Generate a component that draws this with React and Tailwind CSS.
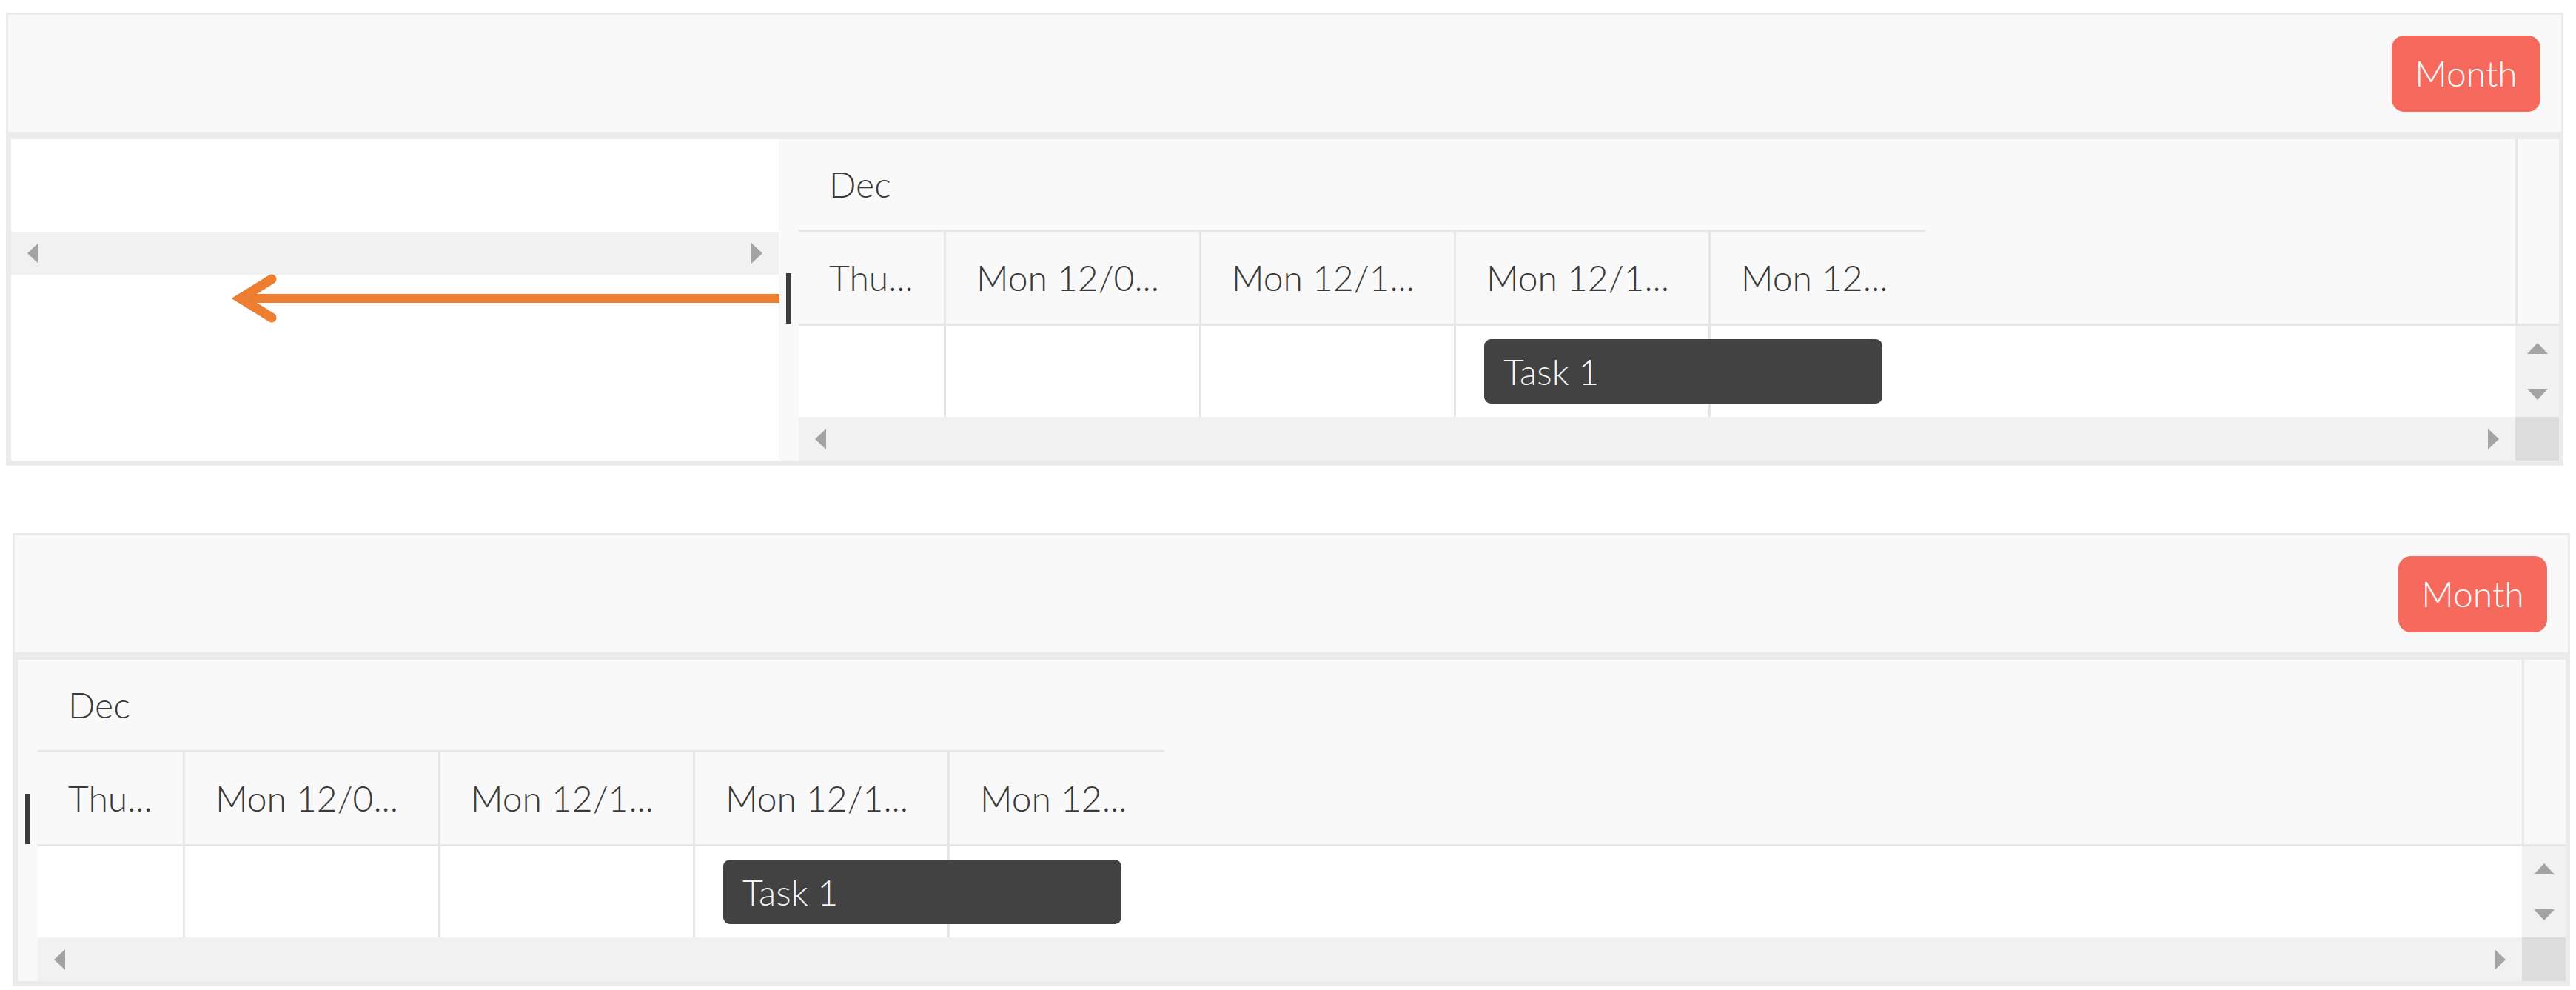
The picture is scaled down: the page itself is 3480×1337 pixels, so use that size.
const DAYS = [
  { label: "Thu...", width: "w-[199px]", line: true },
  { label: "Mon 12/0...", width: "w-[345px]", line: true },
  { label: "Mon 12/1...", width: "w-[344px]", line: true },
  { label: "Mon 12/1...", width: "w-[344px]", line: true },
  { label: "Mon 12...", width: "w-[290px]", line: false }
]

const Tri = ({ dir }) => {
  if (dir === "left")
    return (
      <svg width="15" height="28" viewBox="0 0 15 28">
        <polygon points="15,0 0,14 15,28" fill="#a3a3a3" />
      </svg>
    )
  if (dir === "right")
    return (
      <svg width="15" height="28" viewBox="0 0 15 28">
        <polygon points="0,0 15,14 0,28" fill="#a3a3a3" />
      </svg>
    )
  if (dir === "up")
    return (
      <svg width="28" height="15" viewBox="0 0 28 15">
        <polygon points="0,15 14,0 28,15" fill="#a3a3a3" />
      </svg>
    )
  return (
    <svg width="28" height="15" viewBox="0 0 28 15">
      <polygon points="0,0 28,0 14,15" fill="#a3a3a3" />
    </svg>
  )
}

const HScroll = ({ className = "" }) => (
  <div className={"h-[59px] bg-[#f1f1f1] flex items-center justify-between px-[22px] shrink-0 " + className}>
    <Tri dir="left" />
    <Tri dir="right" />
  </div>
)

const Timeline = () => (
  <div className="flex-1 flex min-w-0">
    <div className="flex-1 flex flex-col min-w-0">
      {/* header */}
      <div className="h-[252px] bg-[#f9f9f9] border-b-[3px] border-[#e6e6e6] shrink-0">
        <div className="w-[1522px] h-[125px] border-b-[3px] border-[#e6e6e6] flex items-center pl-[41px]">
          Dec
        </div>
        <div className="flex h-[124px]">
          {DAYS.map((d, i) => (
            <div
              key={i}
              className={
                d.width +
                " h-full flex items-center pl-[41px] whitespace-nowrap " +
                (d.line ? "border-r-[3px] border-[#e6e6e6]" : "")
              }
            >
              {d.label}
            </div>
          ))}
        </div>
      </div>
      {/* task row */}
      <div className="relative h-[123px] bg-white flex shrink-0">
        {DAYS.map((d, i) => (
          <div
            key={i}
            className={d.width + " h-full " + (d.line ? "border-r-[3px] border-[#e6e6e6]" : "")}
          />
        ))}
        <div className="absolute left-[926px] top-[18px] w-[538px] h-[87px] rounded-[9px] bg-[#424242] text-[#f4f4f4] flex items-center pl-[26px]">
          Task 1
        </div>
      </div>
      <HScroll />
    </div>
    {/* vertical scrollbar column */}
    <div className="w-[59px] flex flex-col shrink-0">
      <div className="h-[252px] bg-[#f9f9f9] border-l-[3px] border-b-[3px] border-[#e6e6e6]" />
      <div className="h-[123px] bg-[#f1f1f1] flex flex-col items-center justify-between py-[23px]">
        <Tri dir="up" />
        <Tri dir="down" />
      </div>
      <div className="h-[59px] bg-[#dcdcdc]" />
    </div>
  </div>
)

const GanttPanel = ({ showGrid, className = "" }) => (
  <div className={"relative w-[3455px] h-[612px] border-[3px] border-[#ebebeb] flex flex-col " + className}>
    <div className="h-[158px] bg-[#f9f9f9] flex items-center justify-end pr-[28px] shrink-0">
      <button className="w-[201px] h-[103px] rounded-[17px] bg-[#f56a5c] text-white text-[48px] font-light">
        Month
      </button>
    </div>
    <div className="flex-1 flex min-h-0 border-l-[4px] border-r-[3px] border-b-[4px] border-t-[10px] border-[#ebebeb]">
      {showGrid && (
        <div className="w-[1037px] flex flex-col bg-white shrink-0">
          <div className="h-[125px] shrink-0" />
          <div className="h-[58px] bg-[#f1f1f1] flex items-center justify-between px-[22px] shrink-0">
            <Tri dir="left" />
            <Tri dir="right" />
          </div>
          <div className="flex-1" />
        </div>
      )}
      <div className="w-[27px] bg-[#f9f9f9] shrink-0 relative">
        <div className="absolute left-[10px] top-[181px] w-[7px] h-[68px] bg-[#3c3c3c]" />
      </div>
      <Timeline />
    </div>
    {showGrid && (
      <svg
        className="absolute left-[289px] top-[340px]"
        width="770"
        height="90"
        viewBox="0 0 770 90"
      >
        <line x1="25" y1="43" x2="753" y2="43" stroke="#ed7d31" strokeWidth="12" />
        <polyline
          points="67,17 25,43 67,69"
          fill="none"
          stroke="#ed7d31"
          strokeWidth="13"
          strokeLinecap="round"
          strokeLinejoin="miter"
        />
      </svg>
    )}
  </div>
)

export default function App() {
  return (
    <div className="w-[3480px] h-[1337px] bg-white font-['Lato',sans-serif] font-light text-[48px] text-[#3a3a3a] leading-none pt-[17px]">
      <GanttPanel showGrid className="ml-[8px]" />
      <GanttPanel className="ml-[17px] mt-[91px]" />
    </div>
  )
}
